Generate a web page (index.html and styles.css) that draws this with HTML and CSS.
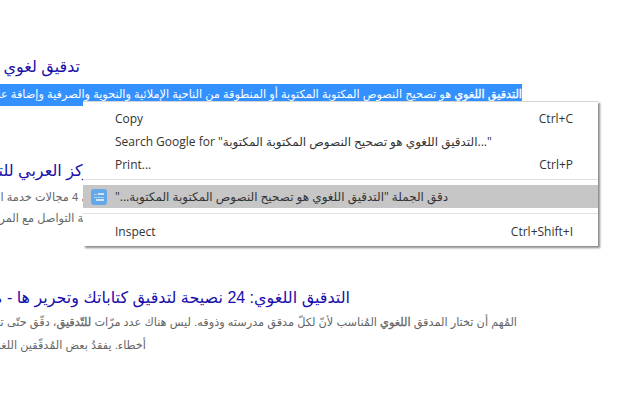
FILE: index.html
```html
<!DOCTYPE html>
<html lang="ar">
<head>
<meta charset="utf-8">
<title>تدقيق لغوي</title>
<link rel="stylesheet" href="styles.css">
</head>
<body>
<main class="results" dir="rtl">
  <section class="result first">
    <h3 class="title title-a">تدقيق لغوي -</h3>
    <p class="line selected"><b>التدقيق اللغوي</b> هو تصحيح النصوص المكتوبة المكتوبة أو المنطوقة من الناحية الإملائية والنحوية والصرفية وإضافة علامات الترقيم</p>
  </section>
  <section class="result second">
    <h3 class="title title-b">المركز العربي للتدقيق اللغوي</h3>
    <p class="line line-b1">يقدم المركز خدماته في 4 مجالات خدمة التدقيق اللغوي</p>
    <p class="line line-b2">وسهولة التواصل مع المركز</p>
  </section>
  <section class="result third">
    <h3 class="title title-c">التدقيق اللغوي: 24 نصيحة لتدقيق كتاباتك وتحرير ها - مدونة</h3>
    <p class="line line-c1">المُهم أن تختار المدقق <b>اللغوي</b> المُناسب لأنّ لكلّ مدقق مدرسته وذوقه. ليس هناك عدد مرّات <b>للتّدقيق</b>، دقّق حتّى تشعر أنّ النص خالٍ من الأخطاء</p>
    <p class="line line-c2">أخطاء. يفقدُ بعض المُدقّقين اللغويين</p>
  </section>
</main>
<div class="menu" dir="ltr">
  <div class="item item-first"><span class="label">Copy</span><span class="key">Ctrl+C</span></div>
  <div class="item"><span class="label">Search Google for "التدقيق اللغوي هو تصحيح النصوص المكتوبة المكتوبة..."</span></div>
  <div class="item"><span class="label">Print...</span><span class="key">Ctrl+P</span></div>
  <hr class="sep">
  <div class="item active">
    <svg class="ext" viewBox="0 0 16 16" aria-hidden="true"><rect width="16" height="16" rx="3" fill="#62a8ea"/><rect x="7" y="4" width="6" height="2" fill="#cfe4f7"/><rect x="3" y="5" width="3" height="1" fill="#a9d2f3"/><rect x="3" y="8" width="10" height="1" fill="#a9d2f3"/><rect x="5" y="10" width="8" height="2" fill="#cfe4f7"/></svg>
    <span class="label" dir="rtl">دقق الجملة "التدقيق اللغوي هو تصحيح النصوص المكتوبة المكتوبة..."</span>
  </div>
  <hr class="sep sep-b">
  <div class="item"><span class="label">Inspect</span><span class="key">Ctrl+Shift+I</span></div>
</div>
</body>
</html>
```
FILE: styles.css
```css
html, body { margin: 0; height: 400px; overflow: hidden; background: #fff; }
body { position: relative; width: 640px; font-family: "Liberation Sans", "DejaVu Sans", sans-serif; }
.results { width: 522px; white-space: nowrap; }
.result { display: flex; flex-direction: column; }
.first { padding-top: 56px; }
.second { padding-top: 54px; }
.third { padding-top: 58px; }
.title { margin: 0; font-size: 16px; font-weight: 400; line-height: 22px; height: 22px; color: #1a0dab; }
.title-a { margin-right: 442px; }
.title-b { margin-right: 412px; }
.title-c { margin-right: 172px; }
.line { margin: 0; font-size: 11.3px; line-height: 21px; height: 21px; color: #666; }
.line b { font-weight: 400; -webkit-text-stroke: 0.3px currentColor; }
.selected { margin-top: 6px; height: 22px; line-height: 20px; background: #3390ff; color: #fff; }
.line-b1 { margin-top: 5px; margin-right: 332px; }
.line-b2 { margin-right: 409px; }
.line-c1 { margin-top: 3px; margin-right: 5px; }
.line-c2 { margin-top: 2px; margin-right: 376px; }
.menu { position: absolute; left: 83px; top: 101px; width: 515px; box-sizing: border-box; height: 145px; padding: 5px 0 0; background: #fff; border-top: 1px solid #d4d4d4; box-shadow: 2px 2px 2px #8a8a8a; font-family: "Open Sans", "DejaVu Sans", sans-serif; font-size: 12px; color: #333; }
.item { display: flex; align-items: center; height: 23px; padding: 0 25px 0 32px; position: relative; white-space: nowrap; }
.key { margin-left: auto; }
.sep { margin: 3px 0 5px; border: 0; border-top: 1px solid #e0e0e0; height: 0; }
.sep-b { margin: 5px 0 6px; }
.active { background: #c6c6c6; }
.ext { position: absolute; left: 8px; top: 4px; width: 16px; height: 16px; }
```
